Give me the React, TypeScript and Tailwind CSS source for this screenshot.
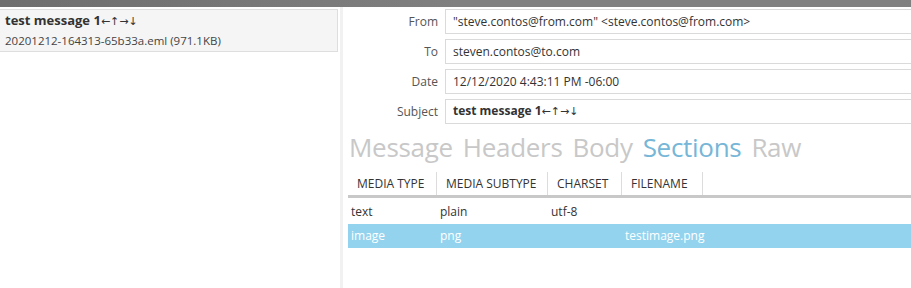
import React from "react";

const Arrows = () => (
  <span className="font-normal text-[11px]" style={{ fontFamily: '"DejaVu Sans", sans-serif' }}>
    ←↑→↓
  </span>
);

const headers = [
  { label: "From", value: <>"steve.contos@from.com" &lt;steve.contos@from.com&gt;</>, bold: false },
  { label: "To", value: <>steven.contos@to.com</>, bold: false },
  { label: "Date", value: <>12/12/2020 4:43:11 PM -06:00</>, bold: false },
  { label: "Subject", value: <>test message 1<Arrows /></>, bold: true },
];

const tabs = ["Message", "Headers", "Body", "Sections", "Raw"];

const columns = [
  { name: "MEDIA TYPE", w: "w-[89px]" },
  { name: "MEDIA SUBTYPE", w: "w-[111px]" },
  { name: "CHARSET", w: "w-[74px]" },
  { name: "FILENAME", w: "w-[81px]" },
];

const rows = [
  { cells: ["text", "plain", "utf-8", ""], selected: false },
  { cells: ["image", "png", "", "testimage.png"], selected: true },
];

export default function App() {
  return (
    <div
      className="w-[911px] h-[288px] overflow-hidden bg-white text-[#333] flex flex-col"
      style={{ fontFamily: '"Segoe UI", "Open Sans", "Noto Sans", sans-serif' }}
    >
      {/* top bar */}
      <div className="h-[7px] shrink-0 bg-gradient-to-r from-[#6e6e6e] via-[#808080] to-[#808080]" />

      <div className="flex flex-1 min-h-0">
        {/* message list */}
        <div className="w-[340px] shrink-0 pt-[2px]">
          <div className="w-[338px] h-[43px] bg-[#f5f5f5] border border-[#dedede] border-l-0 pl-[5px] pt-[1px]">
            <div className="text-[13px] font-bold leading-[18px] text-[#333]">
              test message 1<Arrows />
            </div>
            <div className="text-[11.5px] leading-[20px] text-[#444]">20201212-164313-65b33a.eml (971.1KB)</div>
          </div>
        </div>

        <div className="w-[3px] shrink-0 bg-[#f1f1f1]" />

        {/* detail pane */}
        <div className="flex-1 min-w-0 pt-[2px]">
          <div className="flex flex-col gap-[5px]">
            {headers.map((h) => (
              <div key={h.label} className="flex items-center">
                <div className="w-[102px] shrink-0 text-right pr-[7px] text-[12px] text-[#555]">{h.label}</div>
                <div
                  className={`flex-1 h-[25px] border border-r-0 border-[#dadada] flex items-center pl-[7px] text-[12px] text-[#333] whitespace-pre ${
                    h.bold ? "font-bold" : ""
                  }`}
                >
                  <span>{h.value}</span>
                </div>
              </div>
            ))}
          </div>

          {/* tabs */}
          <div className="flex gap-[10px] pl-[6px] mt-[5px] text-[26px] leading-[36px] tracking-[-0.3px]">
            {tabs.map((t) => (
              <span key={t} className={t === "Sections" ? "text-[#76b6d7]" : "text-[#c8c8c8]"}>
                {t}
              </span>
            ))}
          </div>

          {/* table */}
          <div className="ml-[5px] mt-[7px]">
            <div className="flex h-[23px] border-b-[3px] border-[#c8c8c8] box-content">
              {columns.map((c) => (
                <div
                  key={c.name}
                  className={`${c.w} shrink-0 border-r border-[#dcdcdc] flex items-center pl-[9px] text-[12px] text-[#333]`}
                >
                  {c.name}
                </div>
              ))}
            </div>
            <div className="pt-[2px]">
              {rows.map((r, i) => (
                <div
                  key={i}
                  className={`flex h-[24px] items-center text-[12px] ${
                    r.selected ? "bg-[#94d3ee] text-white" : "text-[#333]"
                  }`}
                >
                  {r.cells.map((cell, j) => (
                    <div key={j} className={`${columns[j].w} shrink-0 pl-[3px]`}>
                      {cell}
                    </div>
                  ))}
                </div>
              ))}
            </div>
          </div>
        </div>
      </div>
    </div>
  );
}
